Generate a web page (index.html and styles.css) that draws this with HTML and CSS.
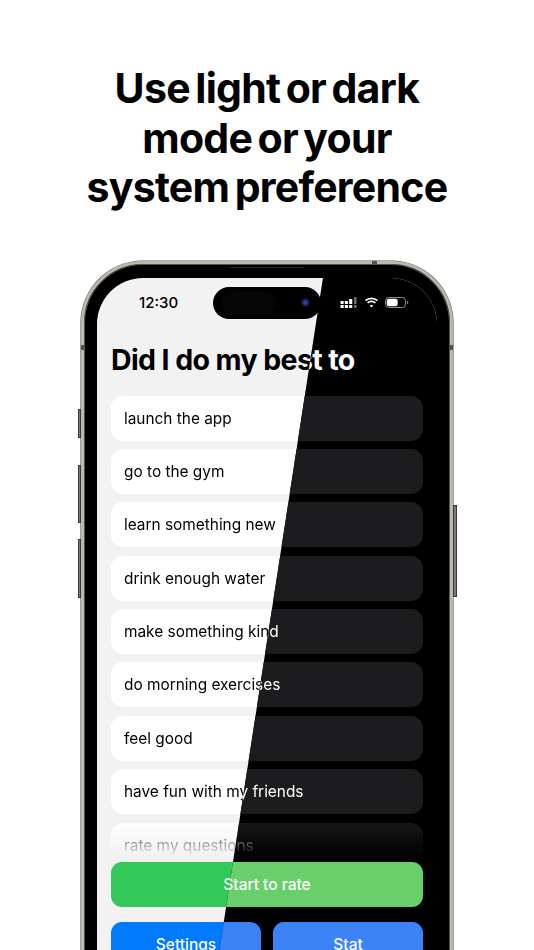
FILE: index.html
```html
<!DOCTYPE html>
<html lang="en">
<head>
<meta charset="utf-8">
<title>Use light or dark mode</title>
<link rel="stylesheet" href="styles.css">
</head>
<body>
<main class="page">
  <h1 class="headline">Use light or dark<br>mode or your<br>system preference</h1>
  <div class="phone">
    <span class="side side-mute"></span>
    <span class="side side-up"></span>
    <span class="side side-down"></span>
    <span class="side side-power"></span>
    <span class="band band-top"></span>
    <span class="band band-left"></span>
    <span class="band band-right"></span>
    <span class="speaker"></span>
    <div class="screen">
      <section class="layer light">
        <div class="status"><span class="time">12:30</span></div>
        <h2 class="title">Did I do my best to</h2>
        <div class="list">
          <div class="row">launch the app</div>
          <div class="row">go to the gym</div>
          <div class="row">learn something new</div>
          <div class="row">drink enough water</div>
          <div class="row">make something kind</div>
          <div class="row">do morning exercises</div>
          <div class="row">feel good</div>
          <div class="row">have fun with my friends</div>
          <div class="row">rate my questions</div>
        </div>
        <div class="btn btn-green">Start to rate</div>
        <div class="btn-pair">
          <div class="btn btn-blue">Settings</div>
          <div class="btn btn-blue">Stat</div>
        </div>
      </section>
      <section class="layer dark">
        <div class="status">
          <span class="time">12:30</span>
          <div class="status-icons">
            <svg class="ico-signal" width="18" height="11" viewBox="0 0 18 11" aria-hidden="true">
              <g fill="#fff">
                <rect x="0.5" y="4" width="3.2" height="3" rx=".6"/><rect x="0.5" y="8" width="3.2" height="3" rx=".6"/>
                <rect x="4.8" y="4" width="3.2" height="3" rx=".6"/><rect x="4.8" y="8" width="3.2" height="3" rx=".6"/>
                <rect x="9.1" y="2" width="3.2" height="5" rx=".6"/><rect x="9.1" y="8" width="3.2" height="3" rx=".6"/>
              </g>
              <g fill="#6b6b6b">
                <rect x="14" y="0" width="2.6" height="7" rx=".6"/><rect x="14" y="8" width="2.6" height="3" rx=".6"/>
              </g>
            </svg>
            <svg class="ico-wifi" width="15" height="11" viewBox="0 0 15 11" aria-hidden="true">
              <path d="M7.5 2.2c2.1 0 4 .8 5.4 2.1l1.1-1.2A9.6 9.6 0 0 0 7.5.5 9.6 9.6 0 0 0 1 3.1l1.1 1.2a7.9 7.9 0 0 1 5.4-2.1Z" fill="#fff"/>
              <path d="M7.5 5.2c1.3 0 2.4.5 3.3 1.2L12 5.2a6.5 6.5 0 0 0-9 0l1.2 1.2c.9-.7 2-1.2 3.3-1.2Z" fill="#fff"/>
              <path d="M7.5 7.9c-.8 0-1.4.3-1.9.7l1.9 2 1.9-2c-.5-.4-1.1-.7-1.9-.7Z" fill="#fff"/>
            </svg>
            <svg class="ico-battery" width="24" height="11" viewBox="0 0 24 11" aria-hidden="true">
              <rect x="0.5" y="0.5" width="20" height="10" rx="3.2" fill="none" stroke="#8a8a8a"/>
              <rect x="1.7" y="1.7" width="11" height="7.6" rx="2.2" fill="#fff"/>
              <path d="M22 3.8c.9.3 1.4 1 1.4 1.7s-.5 1.4-1.4 1.7Z" fill="#8a8a8a"/>
            </svg>
          </div>
        </div>
        <h2 class="title">Did I do my best to</h2>
        <div class="list">
          <div class="row">launch the app</div>
          <div class="row">go to the gym</div>
          <div class="row">learn something new</div>
          <div class="row">drink enough water</div>
          <div class="row">make something kind</div>
          <div class="row">do morning exercises</div>
          <div class="row">feel good</div>
          <div class="row">have fun with my friends</div>
          <div class="row">rate my questions</div>
        </div>
        <div class="btn btn-green">Start to rate</div>
        <div class="btn-pair">
          <div class="btn btn-blue">Settings</div>
          <div class="btn btn-blue">Stat</div>
        </div>
      </section>
      <div class="island"><span class="sensor"></span><span class="lens"></span></div>
    </div>
  </div>
</main>
</body>
</html>
```
FILE: styles.css
```css
* { box-sizing: border-box; }

html, body {
  margin: 0;
  background: #fff;
}

.page {
  width: 534px;
  height: 950px;
  overflow: hidden;
  display: flex;
  flex-direction: column;
  align-items: center;
  font-family: Inter, "Liberation Sans", sans-serif;
  color: #000;
}

.headline {
  margin: 64px 0 0;
  font-size: 41px;
  line-height: 49.5px;
  font-weight: 700;
  letter-spacing: -0.72px;
  word-spacing: -3.6px;
  text-align: center;
  white-space: nowrap;
}

.phone {
  position: relative;
  flex: none;
  margin-top: 48px;
  width: 372px;
  height: 780px;
  padding: 14px 13px 0;
  border-radius: 62px;
  background: #000;
  border: 3px solid #bdb9b1;
  box-shadow: inset 0 0 0 1px #57534d, 0 0 0 .6px #5e5a54;
}

.side {
  position: absolute;
  width: 3.5px;
  background: #7d7870;
  border: 1px solid #3a3835;
}
.side-mute { left: -6.5px; top: 145px; height: 29px; }
.side-up { left: -6.5px; top: 201px; height: 58px; }
.side-down { left: -6.5px; top: 275px; height: 59px; }
.side-power { right: -6.5px; top: 241px; height: 92px; }

.band { position: absolute; background: #55524d; }
.band-top { left: 288px; top: -3px; width: 5px; height: 3px; }
.band-left { left: -3px; top: 81px; width: 3px; height: 5px; }
.band-right { right: -3px; top: 81px; width: 3px; height: 5px; }

.speaker {
  position: absolute;
  left: 146px;
  top: 3px;
  width: 74px;
  height: 1px;
  background: #2a2a2a;
}

.screen {
  position: relative;
  display: grid;
  width: 340px;
  height: 760px;
  border-radius: 46px 46px 0 0;
  overflow: hidden;
}

.layer {
  grid-area: 1 / 1;
  padding: 0 14px;
  display: flex;
  flex-direction: column;
}

.light { background: #f2f2f2; color: #000; }

.dark {
  background: #000;
  color: #fff;
  clip-path: polygon(226px 0, 340px 0, 340px 760px, 109px 760px);
}

.status {
  flex: none;
  height: 50px;
  padding-top: 15px;
  display: flex;
  justify-content: space-between;
  align-items: flex-start;
}

.time {
  margin-left: 28px;
  font-size: 15px;
  line-height: 20px;
  font-weight: 500;
}

.status-icons {
  display: flex;
  align-items: center;
  gap: 6px;
  margin-right: 14px;
  margin-top: 4px;
}
.status-icons svg { display: block; }

.title {
  margin: 13px 0 0;
  font-size: 28.5px;
  line-height: 38px;
  font-weight: 700;
  letter-spacing: -0.6px;
  white-space: nowrap;
}

.list {
  flex: none;
  margin-top: 17px;
  height: 466px;
  overflow: hidden;
  display: flex;
  flex-direction: column;
  gap: 8.4px;
  -webkit-mask-image: linear-gradient(to bottom, #000 420px, transparent 462px);
  mask-image: linear-gradient(to bottom, #000 420px, transparent 462px);
}

.row {
  flex: none;
  height: 45px;
  padding: 0 13px;
  display: flex;
  align-items: center;
  border-radius: 12px;
  font-size: 15.4px;
  white-space: nowrap;
}
.light .row { background: #fff; }
.dark .row { background: #1c1c1e; }

.btn {
  height: 45px;
  display: flex;
  align-items: center;
  justify-content: center;
  border-radius: 11px;
  color: #fff;
  font-size: 15.5px;
  font-weight: 500;
}

.light .btn-green { background: #34c759; }
.dark .btn-green { background: #68d06a; }
.light .btn-blue { background: #007aff; }
.dark .btn-blue { background: #3b82f6; }

.btn-pair {
  margin-top: 15px;
  display: grid;
  grid-template-columns: 150px 150px;
  justify-content: space-between;
}

.island {
  position: absolute;
  left: 116px;
  top: 9px;
  width: 108px;
  height: 32px;
  padding: 0 8px;
  border-radius: 16px;
  background: #000;
  display: flex;
  align-items: center;
  justify-content: space-between;
}

.sensor {
  width: 55px;
  height: 24px;
  border-radius: 12px;
  background: #050505;
}

.lens {
  width: 9px;
  height: 9px;
  margin-right: 3px;
  border-radius: 50%;
  background: radial-gradient(circle, #2c3f9c 0 25%, #10123a 55%, #07070f 100%);
}
```
